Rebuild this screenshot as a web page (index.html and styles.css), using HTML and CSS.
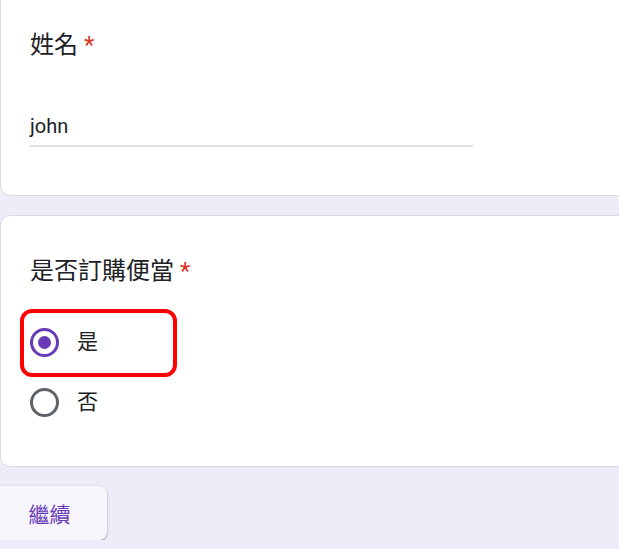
FILE: index.html
```html
<!DOCTYPE html>
<html lang="zh-Hant">
<head>
<meta charset="utf-8">
<title>表單</title>
<link rel="stylesheet" href="styles.css">
</head>
<body>
<div class="page">
  <section class="card card-first">
    <div class="q-title">姓名 <span class="req">*</span></div>
    <div class="text-input">john</div>
  </section>
  <section class="card card-second">
    <div class="q-title">是否訂購便當 <span class="req">*</span></div>
    <div class="options">
      <div class="option selected">
        <span class="radio"><span class="dot"></span></span>
        <span class="opt-label">是</span>
        <span class="highlight"></span>
      </div>
      <div class="option">
        <span class="radio"></span>
        <span class="opt-label">否</span>
      </div>
    </div>
  </section>
  <div class="actions">
    <button class="btn-next">繼續</button>
  </div>
</div>
</body>
</html>
```

FILE: styles.css
```css
html, body {
  margin: 0;
  padding: 0;
  overflow: hidden;
  background: #f0ebf8;
  font-family: Roboto, "Noto Sans CJK TC", "Noto Sans", sans-serif;
  color: #202124;
}
.page {
  display: flex;
  flex-direction: column;
  gap: 19px;
  width: 660px;
}
.card {
  background: #fff;
  border: 1px solid #dadce0;
  border-radius: 10px;
  padding-left: 29px;
}
.card-first {
  margin-top: -12px;
  padding-top: 40px;
  padding-bottom: 48px;
}
.card-second {
  padding-top: 39px;
  padding-bottom: 49px;
}
.q-title {
  font-size: 24px;
  line-height: 32px;
}
.req {
  color: #d93025;
}
.text-input {
  margin-top: 53px;
  width: 443px;
  font-size: 20px;
  line-height: 24px;
  padding-bottom: 7px;
  border-bottom: 2px solid #e0e0e0;
}
.options {
  margin-top: 40px;
  display: flex;
  flex-direction: column;
  gap: 30px;
}
.option {
  position: relative;
  display: flex;
  align-items: center;
  gap: 18px;
  height: 30px;
}
.radio {
  box-sizing: border-box;
  width: 29px;
  height: 29px;
  border: 3px solid #5f6368;
  border-radius: 50%;
  display: flex;
  align-items: center;
  justify-content: center;
}
.option.selected .radio {
  border-color: #673ab7;
}
.dot {
  width: 13px;
  height: 13px;
  border-radius: 50%;
  background: #673ab7;
}
.opt-label {
  font-size: 21px;
  line-height: 30px;
}
.highlight {
  position: absolute;
  left: -10px;
  top: -18px;
  width: 157px;
  height: 68px;
  box-sizing: border-box;
  border: 4px solid #ff0000;
  border-radius: 12px;
}
.actions {
  display: flex;
}
.btn-next {
  margin-left: -20px;
  width: 127px;
  height: 54px;
  border: none;
  border-radius: 8px;
  background: #f8f6fc;
  box-shadow: 0 1px 3px rgba(0,0,0,0.3), 0 1px 1px rgba(0,0,0,0.1);
  color: #673ab7;
  font-family: Roboto, "Noto Sans CJK TC", sans-serif;
  font-size: 21px;
  padding: 0 0 0 12px;
}
```
